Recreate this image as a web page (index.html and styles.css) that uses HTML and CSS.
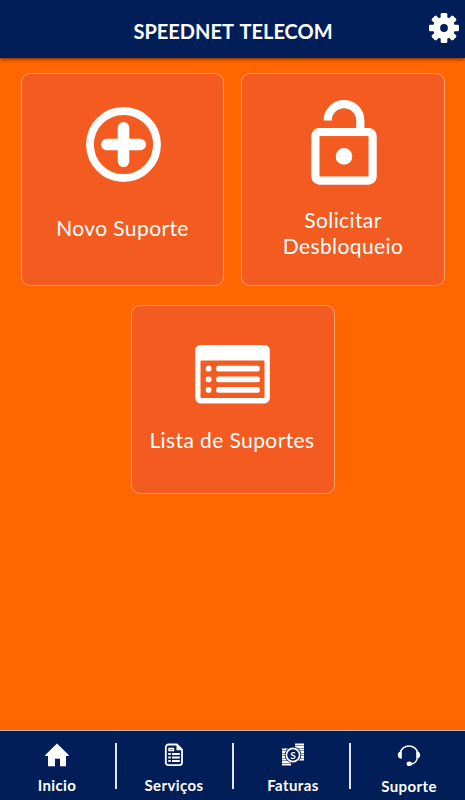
FILE: index.html
```html
<!DOCTYPE html>
<html lang="pt-BR">
<head>
    <meta charset="UTF-8">
    <meta name="viewport" content="width=device-width, initial-scale=1.0">
    <title>Speednet Telecom</title>
    <link rel="stylesheet" href="styles.css">
</head>
<body>
    <header class="header">
        <h1 class="title">SPEEDNET TELECOM</h1>
        <svg class="gear" viewBox="-15 -15 30 30">
            <g fill="#fff">
                <rect x="-3.3" y="-15" width="6.6" height="30" rx="1.3"/>
                <rect x="-3.3" y="-15" width="6.6" height="30" rx="1.3" transform="rotate(45)"/>
                <rect x="-3.3" y="-15" width="6.6" height="30" rx="1.3" transform="rotate(90)"/>
                <rect x="-3.3" y="-15" width="6.6" height="30" rx="1.3" transform="rotate(135)"/>
                <circle r="10.9"/>
            </g>
            <circle r="3.9" fill="#021e58"/>
        </svg>
    </header>

    <!-- Cards -->
    <main class="cards">
        <div class="card card-novo">
            <svg class="icon-plus" viewBox="0 0 75 75" fill="none" stroke="#fff">
                <circle cx="37.5" cy="37.5" r="33.5" stroke-width="7.8"/>
                <path d="M20.7 37.5h33.6M37.5 20.7v33.6" stroke-width="11.6" stroke-linecap="round"/>
            </svg>
            <span class="label">Novo Suporte</span>
        </div>
        <div class="card">
            <svg class="icon-lock" viewBox="0 0 66 85" fill="none" stroke="#fff">
                <rect x="4.5" y="32.1" width="57" height="48.4" rx="4" stroke-width="8.4"/>
                <path d="M16.7 20.5a16.3 16.3 0 0 1 32.6 0V31" stroke-width="8.2"/>
                <path d="M8.7 36.3h48.6v40H8.7z" fill="#f35b20" stroke="none"/>
                <circle cx="33" cy="56.4" r="8.3" fill="#fff" stroke="none"/>
            </svg>
            <span class="label">Solicitar<br>Desbloqueio</span>
        </div>
        <div class="card card-small">
            <svg class="icon-list" viewBox="0 0 75 59" fill="#fff">
                <path fill-rule="evenodd" d="M5.5 0h64a5.3 5.3 0 0 1 5.3 5.3v47.8a5.3 5.3 0 0 1-5.3 5.3h-64a5.3 5.3 0 0 1-5.3-5.3V5.3A5.3 5.3 0 0 1 5.5 0zM6.5 15.4a1 1 0 0 0-1 1V52a1 1 0 0 0 1 1h62a1 1 0 0 0 1-1V16.4a1 1 0 0 0-1-1z"/>
                <rect x="10.8" y="20.8" width="5.6" height="5.8" rx="2"/>
                <rect x="21.2" y="20.8" width="43.6" height="5.8" rx="2"/>
                <rect x="10.8" y="31.4" width="5.6" height="5.8" rx="2"/>
                <rect x="21.2" y="31.4" width="43.6" height="5.8" rx="2"/>
                <rect x="10.8" y="42" width="5.6" height="5.8" rx="2"/>
                <rect x="21.2" y="42" width="43.6" height="5.8" rx="2"/>
            </svg>
            <span class="label">Lista de Suportes</span>
        </div>
    </main>

    <!-- Menu inferior -->
    <nav class="menu">
        <a class="menu-item inicio-item">
            <svg viewBox="0 0 24 24" fill="#fff">
                <path d="M12 .5 24 12.2l-.6.8H21v10.3h-6v-7.5h-5v7.5H3V13H.6L0 12.2z"/>
            </svg>
            <span>Inicio</span>
        </a>
        <a class="menu-item servicos-item">
            <svg viewBox="0 0 24 24" fill="none" stroke="#fff">
                <path d="M6.500 1.500h8.300l5.200 5.200v12.800a2.700 2.700 0 0 1-2.700 2.700H6.500a2.700 2.700 0 0 1-2.700-2.700V4.200a2.700 2.700 0 0 1 2.700-2.700z" stroke-width="1.8"/>
                <path d="M14.500 1v6.300h6z" fill="#fff" stroke="none"/>
                <path d="M7 5.500h4.500v2H7z" stroke-width="1.4"/>
                <path d="M6.300 11h2.500M10 11h7.800M6.300 14.500h2.500M10 14.500h7.800M6.300 18h2.500M10 18h7.800" stroke-width="2"/>
            </svg>
            <span>Serviços</span>
        </a>
        <a class="menu-item faturas-item">
            <svg viewBox="0 0 24 24">
                <path d="M14 1.500h9M14 4h9M14 6.500h9M14 9h9M14 11.500h9M14 14h9M14 16.500h9M1 6.500h9M1 9h9M1 11.500h9M1 14h9M1 16.500h9M1 19h9M1 21.500h9" stroke="#fff" stroke-width="1.9"/>
                <circle cx="12" cy="12" r="8.3" fill="#021e58"/>
                <circle cx="12" cy="12" r="6.6" fill="none" stroke="#fff" stroke-width="1.7"/>
                <text class="coin" x="12" y="15.6" text-anchor="middle" fill="#fff">S</text>
            </svg>
            <span>Faturas</span>
        </a>
        <a class="menu-item suporte-item">
            <svg viewBox="0 0 24 24" fill="none" stroke="#fff">
                <path d="M3.2 10a9 9 0 0 1 17.6 0" stroke-width="1.5"/>
                <path d="M20.3 15.500c-.8 3.600-3.300 5.400-7.300 5.800" stroke-width="1.3"/>
                <path d="M4.800 8.300v7.400C2.300 15.700.8 14.300.8 12s1.500-3.700 4-3.700zM19.200 8.300v7.400c2.500 0 4-1.400 4-3.700s-1.500-3.700-4-3.700z" fill="#fff" stroke="none"/>
                <ellipse cx="12.3" cy="20.7" rx="2.7" ry="2.3" fill="#fff" stroke="none"/>
            </svg>
            <span>Suporte</span>
        </a>
    </nav>
</body>
</html>
```
FILE: styles.css
```css
* {
    box-sizing: border-box;
}

body {
    margin: 0;
    height: 100vh;
    display: flex;
    flex-direction: column;
    overflow: hidden;
    font-family: Lato, "Open Sans", sans-serif;
    color: #fff;
    background-color: #ff6600;
}

/* Topo */
.header {
    height: 58px;
    flex-shrink: 0;
    display: grid;
    grid-template-columns: 37px 1fr 30px;
    padding-right: 6px;
    background-color: #021e58;
    box-shadow: 0 1px 4px rgba(0, 0, 0, 0.6);
}

.title {
    grid-column: 2;
    margin: 19px 0 0;
    font-size: 20px;
    line-height: 24px;
    font-weight: 700;
    word-spacing: 2px;
    text-align: center;
    white-space: nowrap;
}

.gear {
    width: 30px;
    height: 30px;
    margin-top: 13px;
}

/* Cards */
.cards {
    flex-grow: 1;
    display: flex;
    flex-wrap: wrap;
    justify-content: center;
    align-content: flex-start;
    gap: 19px 17px;
    padding: 15px 0 0 1px;
}

.card {
    width: 204px;
    height: 213px;
    display: flex;
    flex-direction: column;
    align-items: center;
    border: 1px solid #ffa170;
    border-radius: 9px;
    background-color: #f35b20;
}

.card-novo {
    width: 203px;
}

.card-small {
    height: 189px;
}

.icon-plus {
    width: 75px;
    height: 75px;
    margin: 33px 0 33px 2px;
}

.icon-lock {
    width: 66px;
    height: 85px;
    margin: 26px 0 22px 2px;
}

.icon-list {
    width: 75px;
    height: 59px;
    margin: 39px 1px 23px 0;
}

.label {
    font-size: 21px;
    line-height: 26px;
    letter-spacing: 0.4px;
    text-align: center;
    white-space: nowrap;
}

.card-small .label {
    margin-right: 2px;
}

/* Menu inferior */
.menu {
    height: 70px;
    flex-shrink: 0;
    display: grid;
    grid-template-columns: 115px 117px 117px 1fr;
    background-color: #021e58;
    border-top: 1px solid #b7b5bd;
}

.menu-item {
    display: flex;
    flex-direction: column;
    align-items: center;
    padding-top: 12px;
    font-size: 15px;
    line-height: 20px;
    font-weight: 700;
    letter-spacing: 0.4px;
}

.menu-item + .menu-item {
    border-left: 2px solid #e4e6ee;
    border-image: linear-gradient(transparent 12px, #e4e6ee 12px, #e4e6ee 58px, transparent 58px) 0 0 0 2;
}

.menu-item svg {
    width: 24px;
    height: 24px;
    margin-bottom: 8px;
}

.inicio-item,
.servicos-item {
    padding-right: 1px;
}

.faturas-item {
    padding-left: 3px;
}

.suporte-item {
    padding-left: 2px;
}

.suporte-item svg {
    margin-bottom: 9px;
}

.coin {
    font-size: 10px;
    font-weight: 700;
    letter-spacing: 0;
}
```
